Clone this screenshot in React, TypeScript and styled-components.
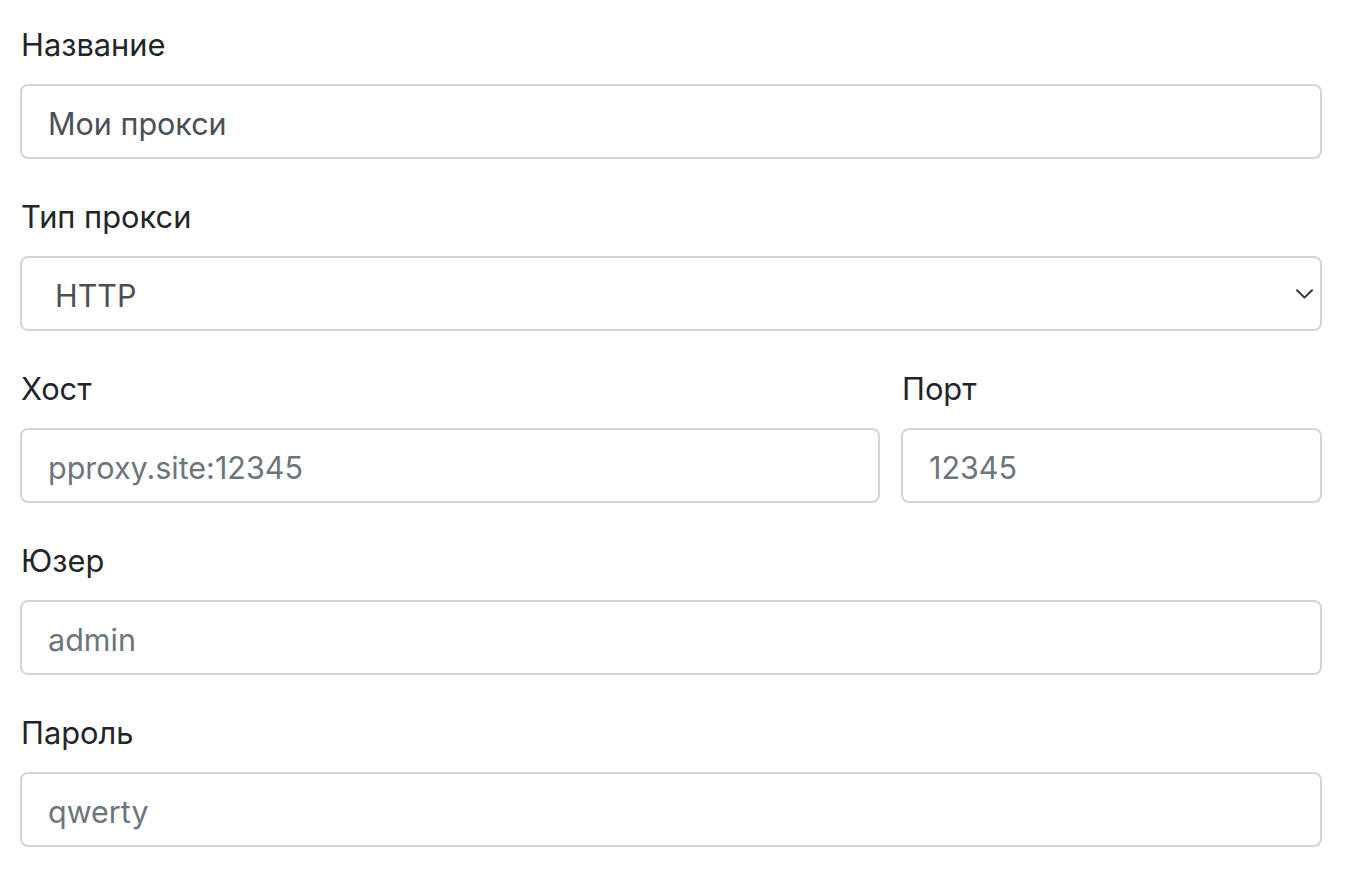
import React from "react";
import styled, { createGlobalStyle } from "styled-components";

const Global = createGlobalStyle`
  html, body { margin: 0; padding: 0; background: #ffffff; }
  body { font-family: Inter, "Noto Sans", "Liberation Sans", sans-serif; color: #212529; }
  * { box-sizing: border-box; }
`;

const Form = styled.form`
  display: flex;
  flex-direction: column;
  padding: 21px 26px 0 20px;
`;

const Group = styled.div`
  display: flex;
  flex-direction: column;
  margin-bottom: 34px;
  min-width: 0;
`;

const Row = styled.div`
  display: grid;
  grid-template-columns: 860px 1fr;
  column-gap: 21px;
`;

const Label = styled.label`
  font-size: 30.8px;
  line-height: 48px;
  height: 48px;
  margin-bottom: 15px;
  padding-left: 1px;
  color: #212529;
`;

const Input = styled.input`
  height: 75px;
  width: 100%;
  border: 2px solid #d1d5db;
  border-radius: 8px;
  padding: 3px 0 0 26px;
  font-family: inherit;
  font-size: 30.5px;
  color: #495057;
  background: #fff;
  outline: none;
  &::placeholder { color: #6c757d; opacity: 1; }
`;

const SelectWrap = styled.div`
  position: relative;
  width: 100%;
`;

const Select = styled.select`
  appearance: none;
  -webkit-appearance: none;
  height: 75px;
  width: 100%;
  border: 2px solid #d1d5db;
  border-radius: 8px;
  padding: 3px 0 0 33px;
  font-family: inherit;
  font-size: 30.5px;
  color: #495057;
  background: #fff;
  outline: none;
`;

const Chevron = styled.svg`
  position: absolute;
  right: 9px;
  top: 33px;
  width: 17px;
  height: 10px;
  pointer-events: none;
`;

export default function App() {
  return (
    <>
      <Global />
      <Form>
        <Group>
          <Label htmlFor="name">Название</Label>
          <Input id="name" defaultValue="Мои прокси" />
        </Group>
        <Group>
          <Label htmlFor="type">Тип прокси</Label>
          <SelectWrap>
            <Select id="type" defaultValue="HTTP">
              <option>HTTP</option>
              <option>SOCKS5</option>
            </Select>
            <Chevron viewBox="0 0 17 10" fill="none">
              <path d="M1 1.2 8.5 8.6 16 1.2" stroke="#343a40" strokeWidth="2" strokeLinecap="round" strokeLinejoin="round" />
            </Chevron>
          </SelectWrap>
        </Group>
        <Row>
          <Group>
            <Label htmlFor="host">Хост</Label>
            <Input id="host" placeholder="pproxy.site:12345" />
          </Group>
          <Group>
            <Label htmlFor="port">Порт</Label>
            <Input id="port" placeholder="12345" />
          </Group>
        </Row>
        <Group>
          <Label htmlFor="user">Юзер</Label>
          <Input id="user" placeholder="admin" />
        </Group>
        <Group>
          <Label htmlFor="pass">Пароль</Label>
          <Input id="pass" placeholder="qwerty" />
        </Group>
      </Form>
    </>
  );
}
